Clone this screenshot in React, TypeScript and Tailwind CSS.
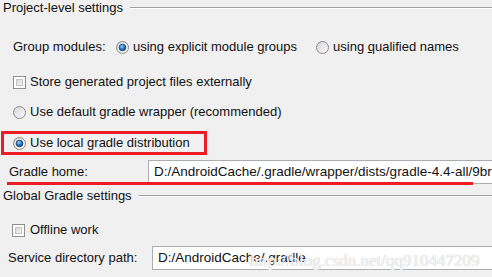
import React from "react";

function Radio({ checked }: { checked?: boolean }) {
  return (
    <svg width="13" height="13" viewBox="0 0 13 13" className="shrink-0">
      <defs>
        <linearGradient id={checked ? "rg-on" : "rg-off"} x1="0" y1="0" x2="1" y2="1">
          <stop offset="0" stopColor="#d4d4d4" />
          <stop offset="1" stopColor="#fbfbfb" />
        </linearGradient>
        <radialGradient id="dot" cx="0.4" cy="0.35" r="0.7">
          <stop offset="0" stopColor="#9fd4ff" />
          <stop offset="0.5" stopColor="#2a7fd0" />
          <stop offset="1" stopColor="#0d3f7a" />
        </radialGradient>
      </defs>
      <circle cx="6.5" cy="6.5" r="6" fill={`url(#${checked ? "rg-on" : "rg-off"})`} stroke="#8a8a8a" />
      {checked && <circle cx="6.5" cy="6.5" r="3.3" fill="url(#dot)" stroke="#1d3f66" strokeWidth="0.8" />}
    </svg>
  );
}

function Checkbox() {
  return (
    <span className="box-border flex h-[13px] w-[13px] shrink-0 border border-[#8e8f8f] bg-white p-[2px]">
      <span className="h-full w-full border border-[#c4c4c4] bg-gradient-to-br from-[#d8d8d8] to-[#f7f7f7]" />
    </span>
  );
}

function Header({ title }: { title: string }) {
  return (
    <div className="flex h-[16px] items-center pl-[3px]">
      <span className="whitespace-nowrap pr-[7px]">{title}</span>
      <span className="h-[2px] flex-1 border-t border-b border-t-[#a0a0a0] border-b-white" />
    </div>
  );
}

export default function App() {
  return (
    <div
      className="relative flex h-[277px] w-[492px] flex-col overflow-hidden bg-[#f0f0f0] text-[13px] text-[#111]"
      style={{ fontFamily: '"Liberation Sans", Arial, sans-serif' }}
    >
      <Header title="Project-level settings" />

      <div className="mt-[21px] flex h-[20px] items-center pl-[13px]">
        <span className="w-[103px]">Group modules:</span>
        <Radio checked />
        <span className="ml-[4px]">
          using explicit module <u>g</u>roups
        </span>
        <span className="ml-[19px] flex items-center">
          <Radio />
          <span className="ml-[4px]">
            using <u>q</u>ualified names
          </span>
        </span>
      </div>

      <div className="mt-[15px] flex h-[20px] items-center gap-[4px] pl-[13px]">
        <Checkbox />
        <span>Store generated project files externally</span>
      </div>

      <div className="mt-[10px] flex h-[20px] items-center gap-[4px] pl-[13px]">
        <Radio />
        <span>Use default gradle wrapper (recommended)</span>
      </div>

      <div className="mt-[9px] ml-[1px] flex h-[24px] w-[206px] items-center gap-[4px] border-[3px] border-[#ed1c24] pl-[9px]">
        <Radio checked />
        <span>Use local gradle distribution</span>
      </div>

      <div className="relative mt-[5px] flex h-[24px] items-center pl-[9px]">
        <span className="w-[139px]">Gradle home:</span>
        <div className="flex h-full min-w-0 flex-1 items-center overflow-hidden whitespace-nowrap border border-r-0 border-[#abadb3] bg-white pl-[5px] text-[13.5px]">
          D:/AndroidCache/.gradle/wrapper/dists/gradle-4.4-all/9br9bj6lx5i9t4x3czmxi6dd9
        </div>
        <span className="absolute bottom-[-1px] left-[7px] h-[3px] w-[466px] bg-[#ed1c24]" />
      </div>

      <div className="mt-[4px]">
        <Header title="Global Gradle settings" />
      </div>

      <div className="mt-[16px] flex h-[20px] items-center gap-[5px] pl-[12px]">
        <Checkbox />
        <span>Offline work</span>
      </div>

      <div className="mt-[6px] flex h-[24px] items-center pl-[8px]">
        <span className="w-[144px]">Service directory path:</span>
        <div className="flex h-full min-w-0 flex-1 items-center overflow-hidden whitespace-nowrap border border-r-0 border-[#abadb3] bg-white pl-[5px] text-[13.5px]">
          D:/AndroidCache/.gradle
        </div>
      </div>

      <span
        className="pointer-events-none absolute left-[250px] top-[248px] whitespace-nowrap text-[17px] text-[#f4f4f4] [text-shadow:0_0_1px_#b8b8b8]"
        style={{ fontFamily: '"Liberation Serif", serif' }}
      >
        http://blog.csdn.net/qq910447209
      </span>
    </div>
  );
}
